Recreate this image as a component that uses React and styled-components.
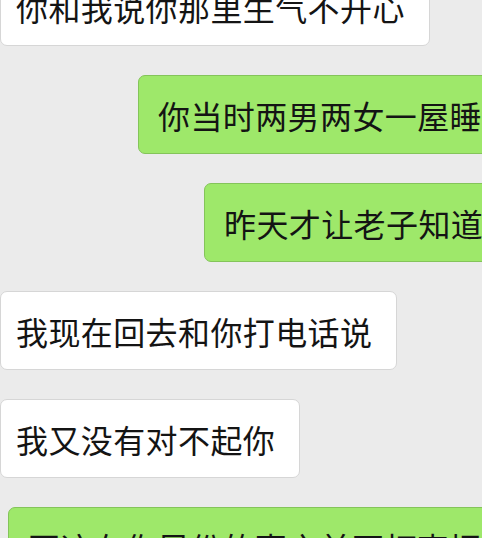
import styled, { createGlobalStyle } from 'styled-components'

const Global = createGlobalStyle`
  html, body {
    margin: 0;
    padding: 0;
    background: #ebebeb;
    overflow: hidden;
  }
`

const Page = styled.div`
  width: 482px;
  height: 538px;
  overflow: hidden;
  background: #ebebeb;
  font-family: "Noto Sans CJK SC", "Noto Sans", sans-serif;
`

const Chat = styled.div`
  display: flex;
  flex-direction: column;
  gap: 29px;
  margin-top: -33px;
`

const Row = styled.div`
  display: flex;
  padding-left: ${(p) => p.$indent}px;
  white-space: nowrap;
`

const Bubble = styled.div`
  box-sizing: border-box;
  height: 79px;
  display: flex;
  align-items: center;
  padding: 0 24px 0 ${(p) => (p.$mine ? 19 : 15)}px;
  font-size: 32px;
  letter-spacing: 0.4px;
  color: #141414;
  border-radius: 7px;
  background: ${(p) => (p.$mine ? '#9ee86a' : '#ffffff')};
  border: 1px solid ${(p) => (p.$mine ? '#84c45a' : '#d6d6d6')};
  flex-shrink: 0;
`

const messages = [
  { text: '你和我说你那里生气不开心', mine: false, indent: -4 },
  { text: '你当时两男两女一屋睡觉', mine: true, indent: 138 },
  { text: '昨天才让老子知道', mine: true, indent: 204 },
  { text: '我现在回去和你打电话说', mine: false, indent: -4 },
  { text: '我又没有对不起你', mine: false, indent: -4 },
  { text: '再这在你早份的事之前不打声招呼', mine: true, indent: 8 },
]

function App() {
  return (
    <>
      <Global />
      <Page>
        <Chat>
          {messages.map((m, i) => (
            <Row key={i} $indent={m.indent}>
              <Bubble $mine={m.mine}>{m.text}</Bubble>
            </Row>
          ))}
        </Chat>
      </Page>
    </>
  )
}

export default App
